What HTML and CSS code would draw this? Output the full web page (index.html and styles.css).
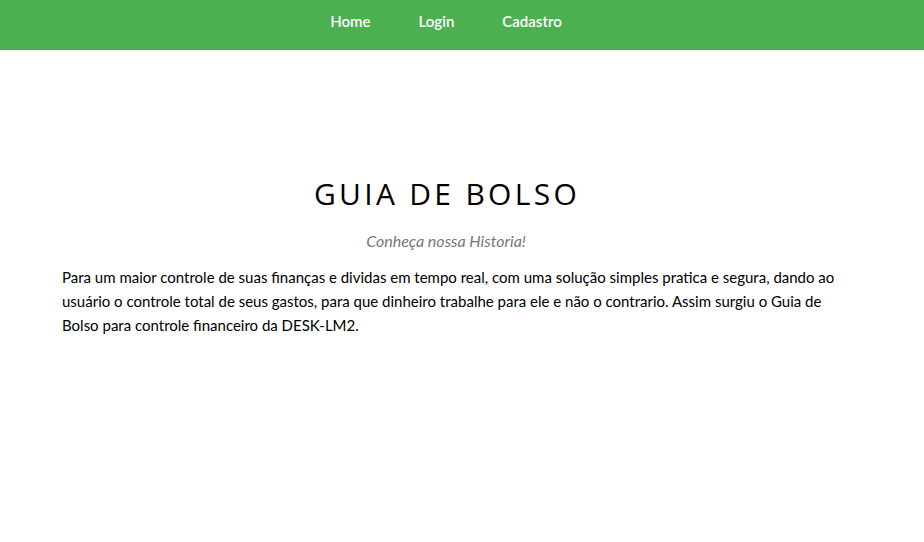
FILE: index.html
```html
<!DOCTYPE html>
<html lang="pt">
<head>
<meta charset="utf-8">
<link rel="stylesheet" href="styles.css">
</head>
<body>
<nav class="topnav">
  <a href="#">Home</a>
  <a href="#">Login</a>
  <a href="#">Cadastro</a>
</nav>
<main class="content">
  <h1 class="title">GUIA DE BOLSO</h1>
  <p class="subtitle">Conheça nossa Historia!</p>
  <p class="text">Para um maior controle de suas finanças e dividas em tempo real, com uma solução simples pratica e segura, dando ao usuário o controle total de seus gastos, para que dinheiro trabalhe para ele e não o contrario. Assim surgiu o Guia de Bolso para controle financeiro da DESK-LM2.</p>
</main>
</body>
</html>
```
FILE: styles.css
```css
html, body { margin: 0; padding: 0; background: #fff; }
body { font-family: Lato, "Open Sans", sans-serif; color: #000; }
.topnav {
  height: 50px;
  background: #4caf50;
  display: flex;
  justify-content: center;
  align-items: flex-start;
  padding-right: 32px;
}
.topnav a {
  color: #fff;
  text-decoration: none;
  font-size: 15px;
  font-weight: 600;
  padding: 0 24px;
  line-height: 42px;
}
.content {
  width: 768px;
  padding-left: 62px;
  padding-top: 124px;
  text-align: center;
}
.title {
  margin: 0 0 0 2px;
  font-family: "Open Sans", sans-serif;
  font-weight: 400;
  font-size: 30px;
  letter-spacing: 3.3px;
  line-height: 40px;
}
.subtitle {
  margin: 17px 0 0;
  font-style: italic;
  color: #777;
  font-size: 16px;
  line-height: 20px;
}
.text {
  margin: 14px -16px 0 0;
  text-align: left;
  font-size: 15px;
  line-height: 24px;
}
```
